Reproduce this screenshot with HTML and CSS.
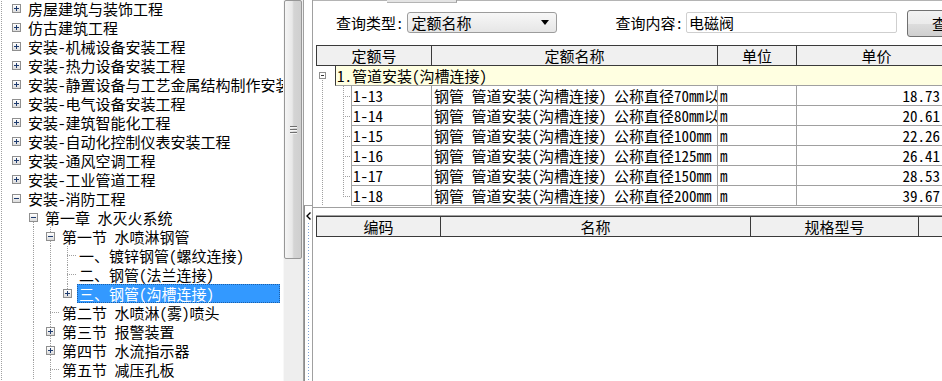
FILE: index.html
```html
<!DOCTYPE html>
<html lang="zh-CN">
<head>
  <meta charset="UTF-8">
  <title>定额查询</title>
  <link rel="stylesheet" href="styles.css">
</head>
<body>
  <div class="app">
    <div class="tree">
      <div class="node"><i class="tg"><b class="box plus"></b></i><span class="lb">房屋建筑与装饰工程</span></div>
      <div class="node"><i class="tg"><b class="box plus"></b></i><span class="lb">仿古建筑工程</span></div>
      <div class="node"><i class="tg"><b class="box plus"></b></i><span class="lb">安装-机械设备安装工程</span></div>
      <div class="node"><i class="tg"><b class="box plus"></b></i><span class="lb">安装-热力设备安装工程</span></div>
      <div class="node"><i class="tg"><b class="box plus"></b></i><span class="lb">安装-静置设备与工艺金属结构制作安装工程</span></div>
      <div class="node"><i class="tg"><b class="box plus"></b></i><span class="lb">安装-电气设备安装工程</span></div>
      <div class="node"><i class="tg"><b class="box plus"></b></i><span class="lb">安装-建筑智能化工程</span></div>
      <div class="node"><i class="tg"><b class="box plus"></b></i><span class="lb">安装-自动化控制仪表安装工程</span></div>
      <div class="node"><i class="tg"><b class="box plus"></b></i><span class="lb">安装-通风空调工程</span></div>
      <div class="node"><i class="tg"><b class="box plus"></b></i><span class="lb">安装-工业管道工程</span></div>
      <div class="node"><i class="tg"><b class="box minus"></b></i><span class="lb">安装-消防工程</span></div>
      <div class="node"><i class="ind"></i><i class="tg down"><b class="box minus"></b></i><span class="lb">第一章 水灭火系统</span></div>
      <div class="node"><i class="ind"></i><i class="ind v"></i><i class="tg vl"><b class="box minus"></b></i><span class="lb">第一节 水喷淋钢管</span></div>
      <div class="node"><i class="ind"></i><i class="ind v"></i><i class="ind v"></i><i class="tg leaf"></i><span class="lb">一、镀锌钢管(螺纹连接)</span></div>
      <div class="node"><i class="ind"></i><i class="ind v"></i><i class="ind v"></i><i class="tg leaf"></i><span class="lb">二、钢管(法兰连接)</span></div>
      <div class="node sel"><i class="ind"></i><i class="ind v"></i><i class="ind v"></i><i class="tg up"><b class="box plus"></b></i><span class="lb">三、钢管(沟槽连接)</span></div>
      <div class="node"><i class="ind"></i><i class="ind v"></i><i class="tg leaf"></i><span class="lb">第二节 水喷淋(雾)喷头</span></div>
      <div class="node"><i class="ind"></i><i class="ind v"></i><i class="tg vl"><b class="box plus"></b></i><span class="lb">第三节 报警装置</span></div>
      <div class="node"><i class="ind"></i><i class="ind v"></i><i class="tg vl"><b class="box plus"></b></i><span class="lb">第四节 水流指示器</span></div>
      <div class="node"><i class="ind"></i><i class="ind v"></i><i class="tg leaf"></i><span class="lb">第五节 减压孔板</span></div>
    </div>

    <div class="vscroll">
      <div class="thumb"><span class="grip"></span></div>
    </div>

    <div class="splitter">
      <div class="sp-top"></div>
      <div class="sp-bar">
        <svg class="sp-arrow" width="6" height="8" viewBox="0 0 6 8"><polyline points="4.5,0.5 1,4 4.5,7.5" fill="none" stroke="#000" stroke-width="1.4"/></svg>
        <div class="sp-dots"></div>
      </div>
    </div>

    <div class="main">
      <div class="upper">
        <div class="tabstrip"><span class="ts-left"></span><span class="ts-tab"></span><span class="ts-rest"></span></div>
        <div class="query">
          <span class="q-label">查询类型:</span>
          <div class="select"><span>定额名称</span><i class="caret"></i></div>
          <span class="q-label q-label2">查询内容:</span>
          <div class="input">电磁阀</div>
          <div class="btn">查询</div>
        </div>

        <div class="grid">
          <div class="ghead">
            <span>定额号</span><span>定额名称</span><span>单位</span><span>单价</span>
          </div>
          <div class="grp">
            <div class="gt"><b class="gbox"></b></div>
            <div class="gl">1.管道安装(沟槽连接)</div>
          </div>
          <div class="row"><i class="rt"></i><span class="c code">1-13</span><span class="c name">钢管 管道安装(沟槽连接) 公称直径70mm以内</span><span class="c unit">m</span><span class="c price">18.73</span></div>
          <div class="row"><i class="rt"></i><span class="c code">1-14</span><span class="c name">钢管 管道安装(沟槽连接) 公称直径80mm以内</span><span class="c unit">m</span><span class="c price">20.61</span></div>
          <div class="row"><i class="rt"></i><span class="c code">1-15</span><span class="c name">钢管 管道安装(沟槽连接) 公称直径100mm</span><span class="c unit">m</span><span class="c price">22.26</span></div>
          <div class="row"><i class="rt"></i><span class="c code">1-16</span><span class="c name">钢管 管道安装(沟槽连接) 公称直径125mm</span><span class="c unit">m</span><span class="c price">26.41</span></div>
          <div class="row"><i class="rt"></i><span class="c code">1-17</span><span class="c name">钢管 管道安装(沟槽连接) 公称直径150mm</span><span class="c unit">m</span><span class="c price">28.53</span></div>
          <div class="row last"><i class="rt"></i><span class="c code">1-18</span><span class="c name">钢管 管道安装(沟槽连接) 公称直径200mm</span><span class="c unit">m</span><span class="c price">39.67</span></div>
        </div>
      </div>

      <div class="lower">
        <div class="ghead ghead2">
          <span>编码</span><span>名称</span><span>规格型号</span><span></span>
        </div>
      </div>
    </div>
  </div>
</body>
</html>
```

FILE: styles.css
```css
html, body {
  margin: 0;
  padding: 0;
  background: #fff;
}
body {
  width: 942px;
  height: 381px;
  overflow: hidden;
  font-family: "Noto Sans Mono CJK SC", "Noto Sans CJK SC", monospace;
  font-size: 15px;
  color: #000;
}
.app {
  display: flex;
  height: 381px;
}

/* ---- tree ---- */
.tree {
  flex: none;
  width: 283px;
  box-sizing: border-box;
  padding: 0 3px 0 8px;
  margin-top: -1px;
  overflow: hidden;
  background: repeating-linear-gradient(#a0a0a0 0 1px, transparent 1px 2px) 1px 0 / 1px 100% no-repeat;
}
.node {
  display: flex;
  height: 19px;
  line-height: 19px;
  white-space: nowrap;
}
.ind, .tg {
  flex: none;
  width: 17px;
  height: 19px;
}
.ind.v {
  background: repeating-linear-gradient(#a0a0a0 0 1px, transparent 1px 2px) 8px 0 / 1px 100% no-repeat;
}
.tg {
  display: flex;
  align-items: center;
  justify-content: center;
}
.tg.vl {
  background: repeating-linear-gradient(#a0a0a0 0 1px, transparent 1px 2px) 8px 0 / 1px 100% no-repeat;
}
.tg.down {
  background: repeating-linear-gradient(#a0a0a0 0 1px, transparent 1px 2px) 8px 10px / 1px 9px no-repeat;
}
.tg.up {
  background: repeating-linear-gradient(#a0a0a0 0 1px, transparent 1px 2px) 8px 0 / 1px 9px no-repeat;
}
.tg.leaf {
  background:
    repeating-linear-gradient(to right, #a0a0a0 0 1px, transparent 1px 2px) 8px 9px / 9px 1px no-repeat,
    repeating-linear-gradient(#a0a0a0 0 1px, transparent 1px 2px) 8px 0 / 1px 100% no-repeat;
}
.box {
  width: 9px;
  height: 9px;
  box-sizing: border-box;
  border: 1px solid #8f8f8f;
}
.box.plus {
  background:
    linear-gradient(#1e3b6e, #1e3b6e) center / 5px 1px no-repeat,
    linear-gradient(#1e3b6e, #1e3b6e) center / 1px 5px no-repeat,
    linear-gradient(#fff, #dcdcdc);
}
.box.minus {
  background:
    linear-gradient(#1e3b6e, #1e3b6e) center / 5px 1px no-repeat,
    linear-gradient(#fff, #dcdcdc);
}
.lb {
  margin-left: 1px;
  padding: 0 2px;
}
.node.sel .lb {
  flex: 1;
  background: #3399ff;
  color: #fff;
  outline: 1px dotted #1d5fa8;
  outline-offset: -1px;
}

/* ---- scrollbar ---- */
.vscroll {
  flex: none;
  width: 20px;
  box-sizing: border-box;
  background: #eeeeee;
  border-left: 1px solid #f8f8f8;
}
.thumb {
  height: 259px;
  margin: 0 1px 0 0;
  box-sizing: border-box;
  border: 1px solid #979797;
  border-radius: 2px;
  background: linear-gradient(to right, #f5f5f5, #e8e8e8 45%, #d4d4d4 55%, #cfcfcf);
  display: flex;
  align-items: center;
  justify-content: center;
}
.grip {
  width: 7px;
  height: 8px;
  background: repeating-linear-gradient(#6f6f6f 0 1px, #f5f5f5 1px 2px, transparent 2px 3px);
}

/* ---- splitter ---- */
.splitter {
  flex: none;
  width: 10px;
  box-sizing: border-box;
  border-left: 1px solid #a0a0a0;
  border-right: 1px solid #a0a0a0;
  display: flex;
  flex-direction: column;
}
.sp-top {
  height: 205px;
  background: #fff;
}
.sp-bar {
  flex: 1;
  border-top: 1px solid #a0a0a0;
  border-left: 1px solid #8c8c8c;
  display: flex;
  flex-direction: column;
  align-items: center;
}
.sp-arrow {
  margin-top: 6px;
}
.sp-dots {
  flex: 1;
  width: 1px;
  margin-top: 3px;
  background: repeating-linear-gradient(#7ea3d6 0 1px, transparent 1px 3px);
}

/* ---- right pane ---- */
.main {
  flex: 1;
  min-width: 0;
  overflow: hidden;
  display: flex;
  flex-direction: column;
}
.upper {
  height: 207px;
  border-bottom: 1px solid #a0a0a0;
}
.tabstrip {
  display: flex;
  height: 3px;
}
.ts-left {
  width: 74px;
  border-top: 1px solid #b4b4b4;
}
.ts-tab {
  width: 70px;
  box-sizing: border-box;
  background: #e4e4e4;
  border-right: 1px solid #a0a0a0;
  border-bottom: 1px solid #b4b4b4;
}
.ts-rest {
  flex: 1;
  border-top: 1px solid #b4b4b4;
}
.query {
  display: flex;
  align-items: flex-start;
  height: 27px;
  margin-top: 7px;
  padding-left: 23px;
  white-space: nowrap;
}
.query > * {
  flex: none;
}
.q-label {
  margin-top: 2px;
  line-height: 21px;
}
.q-label2 {
  margin-left: 59px;
}
.select {
  margin: 2px 0 0 3px;
  width: 150px;
  height: 21px;
  box-sizing: border-box;
  border: 1px solid #9c9c9c;
  border-radius: 3px;
  background: linear-gradient(#f7f7f7, #e6e6e6);
  display: flex;
  align-items: center;
  padding: 0 4px 0 4px;
  line-height: 19px;
}
.caret {
  margin-left: auto;
  margin-right: 3px;
  width: 0;
  height: 0;
  border-left: 4px solid transparent;
  border-right: 4px solid transparent;
  border-top: 5px solid #000;
}
.input {
  margin: 2px 0 0 3px;
  width: 211px;
  height: 21px;
  box-sizing: border-box;
  border: 1px solid #cfcfcf;
  border-radius: 2px;
  padding-left: 2px;
  line-height: 19px;
}
.btn {
  margin-left: 10px;
  width: 80px;
  height: 27px;
  box-sizing: border-box;
  border: 1px solid #707070;
  border-radius: 3px;
  background: linear-gradient(#f2f2f2, #ebebeb 50%, #dddddd 51%, #cfcfcf);
  text-align: center;
  line-height: 25px;
}

/* ---- grids ---- */
.grid {
  margin: 8px 0 0 3px;
  width: 640px;
}
.ghead {
  display: grid;
  grid-template-columns: 115px 286px 79px 160px;
  height: 21px;
  box-sizing: border-box;
  border: 1px solid #3a3a3a;
  border-right: 0;
  background: #f0f0f0;
  line-height: 19px;
  text-align: center;
}
.ghead span {
  border-right: 1px solid #3a3a3a;
}
.grp {
  display: flex;
  height: 20px;
}
.gt {
  flex: none;
  width: 19px;
  display: flex;
  flex-direction: column;
  align-items: flex-start;
  padding-left: 3px;
  box-sizing: border-box;
  background: repeating-linear-gradient(#a0a0a0 0 1px, transparent 1px 2px) 6px 14px / 1px 6px no-repeat;
}
.gbox {
  margin-top: 6px;
  width: 7px;
  height: 7px;
  box-sizing: border-box;
  border: 1px solid #8f8f8f;
  background:
    linear-gradient(#333, #333) center / 3px 1px no-repeat,
    #fff;
}
.gl {
  flex: 1;
  background: #ffffe1;
  border-left: 1px solid #3a3a3a;
  border-bottom: 1px solid #a0a0a0;
  padding-left: 1px;
  line-height: 19px;
  white-space: nowrap;
}
.row {
  display: flex;
  height: 20px;
  line-height: 19px;
  white-space: nowrap;
}
.rt {
  flex: none;
  width: 35px;
  background:
    repeating-linear-gradient(to right, #a0a0a0 0 1px, transparent 1px 2px) 27px 10px / 8px 1px no-repeat,
    repeating-linear-gradient(#a0a0a0 0 1px, transparent 1px 2px) 27px 0 / 1px 100% no-repeat,
    repeating-linear-gradient(#a0a0a0 0 1px, transparent 1px 2px) 6px 0 / 1px 100% no-repeat;
}
.row.last .rt {
  background:
    repeating-linear-gradient(to right, #a0a0a0 0 1px, transparent 1px 2px) 27px 10px / 8px 1px no-repeat,
    repeating-linear-gradient(#a0a0a0 0 1px, transparent 1px 2px) 27px 0 / 1px 11px no-repeat,
    repeating-linear-gradient(#a0a0a0 0 1px, transparent 1px 2px) 6px 0 / 1px 100% no-repeat;
}
.c {
  flex: none;
  box-sizing: border-box;
  border-right: 1px solid #a0a0a0;
  border-bottom: 1px solid #a0a0a0;
  overflow: hidden;
}
.code {
  width: 81px;
  border-left: 1px solid #a0a0a0;
  padding-left: 1px;
}
.name {
  width: 286px;
  padding-left: 2px;
}
.unit {
  width: 79px;
  padding-left: 2px;
}
.price {
  width: 146px;
  text-align: right;
  padding-right: 3px;
  border-right: 0;
}
.lower {
  padding: 8px 0 0 3px;
}
.ghead2 {
  width: 640px;
  grid-template-columns: 124px 310px 168px 40px;
  box-shadow: 0 -1px 0 #a0a0a0;
}
```
